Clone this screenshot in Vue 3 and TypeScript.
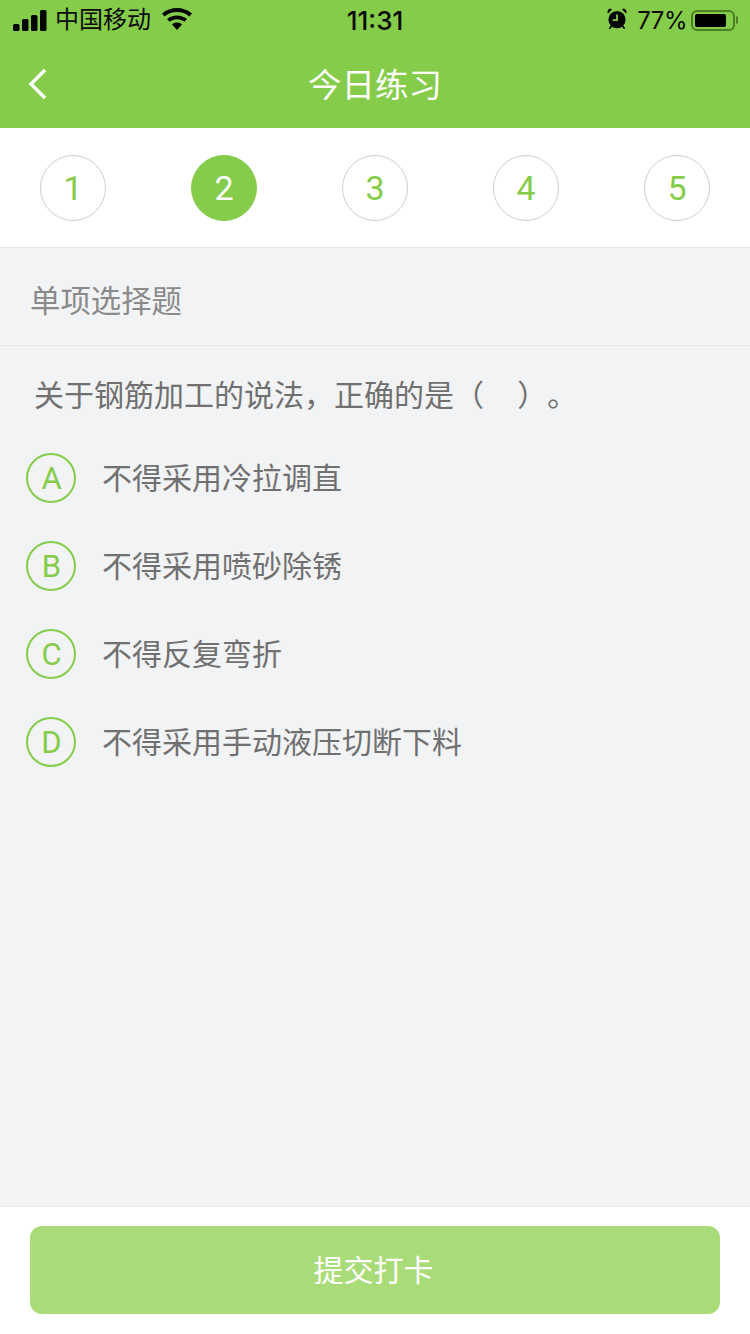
<script setup lang="ts">
const steps = [1, 2, 3, 4, 5]
const current = 2
const options = [
  { key: 'A', text: '不得采用冷拉调直' },
  { key: 'B', text: '不得采用喷砂除锈' },
  { key: 'C', text: '不得反复弯折' },
  { key: 'D', text: '不得采用手动液压切断下料' }
]
</script>

<template>
  <div class="page">
    <header class="top">
      <div class="status">
        <div class="status-left">
          <svg class="signal" width="34" height="21" viewBox="0 0 34 21">
            <rect x="0" y="14" width="6.5" height="7" rx="1.5" />
            <rect x="9" y="9" width="6.5" height="12" rx="1.5" />
            <rect x="18" y="5" width="6.5" height="16" rx="1.5" />
            <rect x="27" y="0" width="6.5" height="21" rx="1.5" />
          </svg>
          <span class="carrier">中国移动</span>
          <svg class="wifi" width="30" height="22" viewBox="0 0 30 22">
            <path d="M15 22l-5-5.6c2.8-2.4 7.2-2.4 10 0z" />
            <path d="M7.6 13.8L5 11c5.6-4.8 14.4-4.8 20 0l-2.6 2.8c-4.2-3.5-10.6-3.5-14.8 0z" />
            <path d="M2.6 8.4L0 5.6C8.4-1.8 21.6-1.8 30 5.6l-2.6 2.8C20.6 2.5 9.4 2.5 2.6 8.4z" />
          </svg>
        </div>
        <span class="time">11:31</span>
        <div class="status-right">
          <svg class="alarm" width="20" height="22" viewBox="0 0 20 22">
            <path d="M1 5.5L5 1.6 3.6.6C2.2.6.4 2.4.4 4z" />
            <path d="M19 5.5L15 1.6 16.4.6c1.4 0 3.2 1.8 3.2 3.4z" />
            <circle cx="10" cy="11.6" r="8.6" />
            <path d="M3.6 17.4l-1.8 3 1.2.8 2.2-2.6zM16.4 17.4l1.8 3-1.2.8-2.2-2.6z" />
            <path d="M10 6.4v5.8H5.6" fill="none" stroke="#85cc4a" stroke-width="1.8" />
          </svg>
          <span class="percent">77%</span>
          <div class="battery">
            <div class="battery-level"></div>
          </div>
          <div class="battery-cap"></div>
        </div>
      </div>
      <div class="nav">
        <svg class="back" width="20" height="32" viewBox="0 0 20 32">
          <path d="M17 2L3 16l14 14" fill="none" stroke="#fff" stroke-width="3.4" />
        </svg>
        <span class="nav-title">今日练习</span>
      </div>
    </header>

    <div class="steps">
      <div v-for="n in steps" :key="n" class="step" :class="{ active: n === current }">{{ n }}</div>
    </div>

    <main class="body">
      <div class="type">单项选择题</div>
      <div class="question">关于钢筋加工的说法，正确的是（&nbsp;&nbsp;&nbsp;&nbsp;）。</div>
      <div class="options">
        <div v-for="o in options" :key="o.key" class="option">
          <span class="option-key">{{ o.key }}</span>
          <span class="option-text">{{ o.text }}</span>
        </div>
      </div>
    </main>

    <footer class="bottom">
      <button class="submit">提交打卡</button>
    </footer>
  </div>
</template>

<style>
html,
body {
  margin: 0;
  background: #f2f3f5;
}
</style>

<style scoped>
.page {
  width: 750px;
  height: 1334px;
  display: flex;
  flex-direction: column;
  background: #f2f3f5;
  font-family: "Liberation Sans", "Noto Sans CJK SC", sans-serif;
  text-spacing-trim: space-all;
  overflow: hidden;
}

.top {
  height: 128px;
  background: #85cc4a;
  flex-shrink: 0;
}

.status {
  height: 40px;
  padding: 0 12px 0 13px;
  display: flex;
  align-items: center;
  justify-content: space-between;
  position: relative;
  color: #0a0a0a;
}

.status-left,
.status-right {
  display: flex;
  align-items: center;
}

.signal,
.wifi,
.alarm {
  fill: #050505;
}

.carrier {
  margin-left: 8px;
  font-size: 24px;
  line-height: 40px;
}

.wifi {
  margin-left: 11px;
  margin-top: -2px;
}

.time {
  position: absolute;
  left: 0;
  right: 0;
  text-align: center;
  font-size: 26px;
  font-family: "Inter", "Liberation Sans", sans-serif;
  font-weight: 500;
}

.alarm {
  margin-top: -2px;
}

.percent {
  margin-left: 10px;
  font-size: 24px;
  font-family: "Inter", "Liberation Sans", sans-serif;
  font-weight: 400;
  letter-spacing: -0.5px;
}

.battery {
  margin-left: 4px;
  width: 44px;
  height: 21px;
  box-sizing: border-box;
  border: 2px solid #4d7f24;
  border-radius: 6px;
  padding: 2px;
}

.battery-level {
  width: 31px;
  height: 13px;
  background: #000;
  border-radius: 2px;
}

.battery-cap {
  width: 2px;
  height: 8px;
  margin-left: 1px;
  background: #4d7f24;
  border-radius: 0 2px 2px 0;
}

.nav {
  height: 88px;
  display: flex;
  align-items: center;
  justify-content: center;
  position: relative;
}

.back {
  position: absolute;
  left: 28px;
  top: 28px;
}

.nav-title {
  color: #fff;
  font-size: 33.5px;
  margin-top: -3px;
}

.steps {
  height: 120px;
  flex-shrink: 0;
  box-sizing: border-box;
  background: #fff;
  border-bottom: 1px solid #e6e6e6;
  padding: 0 40px;
  display: flex;
  align-items: center;
  justify-content: space-between;
}

.step {
  width: 66px;
  height: 66px;
  box-sizing: border-box;
  border: 1px solid #cfcfcf;
  border-radius: 50%;
  display: flex;
  align-items: center;
  justify-content: center;
  font-family: Roboto, "Liberation Sans", sans-serif;
  font-size: 34px;
  color: #85cc4a;
}

.step.active {
  background: #85cc4a;
  border-color: #85cc4a;
  color: #fff;
}

.body {
  flex: 1;
  min-height: 0;
}

.type {
  height: 98px;
  box-sizing: border-box;
  padding: 4px 0 0 30px;
  border-bottom: 1px solid #e9eaec;
  display: flex;
  align-items: center;
  font-size: 30.4px;
  color: #8a8a8a;
}

.question {
  padding: 30px 0 0 34px;
  font-size: 30px;
  line-height: 40px;
  color: #707070;
}

.options {
  padding: 18px 0 0 26px;
}

.option {
  height: 88px;
  display: flex;
  align-items: center;
}

.option-key {
  width: 50px;
  height: 50px;
  box-sizing: border-box;
  border: 2px solid #85cc4a;
  border-radius: 50%;
  display: flex;
  align-items: center;
  justify-content: center;
  font-family: Roboto, "Liberation Sans", sans-serif;
  font-size: 31px;
  padding: 1px 0 0 1px;
  color: #85cc4a;
}

.option-text {
  margin-left: 26px;
  margin-top: -4px;
  font-size: 30px;
  color: #707070;
}

.bottom {
  height: 128px;
  flex-shrink: 0;
  box-sizing: border-box;
  background: #fff;
  border-top: 1px solid #e6e7e9;
  padding: 19px 30px 0;
}

.submit {
  display: block;
  width: 100%;
  height: 88px;
  border: none;
  border-radius: 12px;
  background: #a9dc79;
  color: #fff;
  font-size: 30px;
  font-family: inherit;
  padding: 0 3px 4px 0;
}
</style>
